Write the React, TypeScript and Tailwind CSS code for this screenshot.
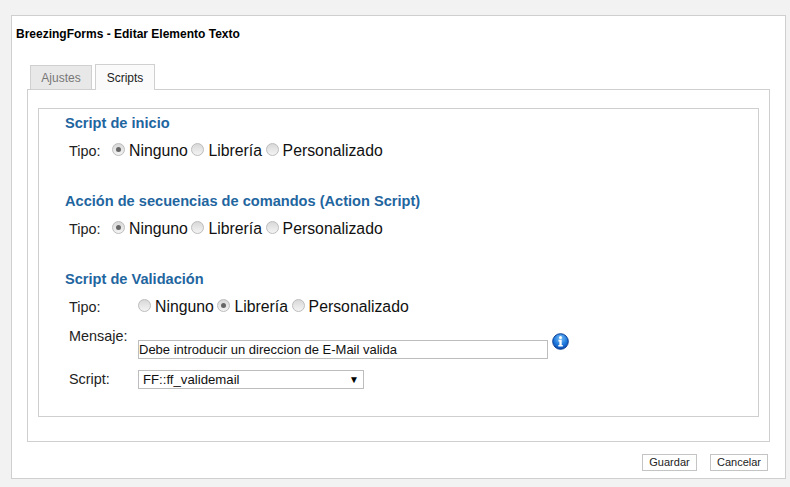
function Radio({ checked }: { checked?: boolean }) {
  return (
    <span className="flex h-[13px] w-[13px] shrink-0 -translate-y-[2px] items-center justify-center rounded-full border border-[#bcbcbc] bg-gradient-to-b from-[#d8d8d8] to-[#f4f4f4]">
      {checked && <span className="h-[5px] w-[5px] rounded-full bg-[#666]" />}
    </span>
  );
}

function Option({ label, checked }: { label: string; checked?: boolean }) {
  return (
    <span className="mr-[3.6px] flex items-center gap-[4px]">
      <Radio checked={checked} />
      <span>{label}</span>
    </span>
  );
}

function TypeRow({ selected, indent }: { selected: string; indent?: boolean }) {
  return (
    <div className="flex h-[20px] items-center text-[15.8px] leading-[20px] text-[#111]">
      <span className="box-content w-[43px] pl-[4px] text-[14.4px] text-[#222]">Tipo:</span>
      <span className={indent ? 'flex pl-[26px]' : 'flex'}>
        {['Ninguno', 'Librería', 'Personalizado'].map((name) => (
          <Option key={name} label={name} checked={name === selected} />
        ))}
      </span>
    </div>
  );
}

function InfoIcon() {
  return (
    <svg width="17" height="17" viewBox="0 0 17 17" className="shrink-0">
      <defs>
        <radialGradient id="infoFill" cx="50%" cy="30%" r="70%">
          <stop offset="0%" stopColor="#7cc0f5" />
          <stop offset="60%" stopColor="#1f7ade" />
          <stop offset="100%" stopColor="#0a48ad" />
        </radialGradient>
      </defs>
      <circle cx="8.5" cy="8.5" r="7.8" fill="url(#infoFill)" stroke="#0a3d94" strokeWidth="1" />
      <circle cx="8.5" cy="4.5" r="1.5" fill="#fff" />
      <path d="M6.5 6.8h3.2v5.2h1.1v1.6H6.3V12h1.1V8.4H6.5z" fill="#fff" />
    </svg>
  );
}

export default function App() {
  return (
    <div
      className="h-[487px] w-[790px] overflow-hidden bg-[#f2f2f2] pl-[11px] pt-[15px]"
      style={{ fontFamily: '"Liberation Sans", Arial, sans-serif' }}
    >
      <div className="h-[464px] w-[775px] border border-[#cfcfcf] bg-white pl-[4px] pt-[10px]">
        <h1 className="h-[16px] text-[12px] font-bold leading-[16px] text-black">
          BreezingForms - Editar Elemento Texto
        </h1>

        {/* Tabs */}
        <div className="ml-[14px] mt-[23px] flex h-[24px] gap-[3px] text-[12px]">
          <div className="flex h-[24px] w-[62px] items-center justify-center border border-b-0 border-[#d0d0d0] bg-[#e8e8e8] text-[#777]">
            Ajustes
          </div>
          <div className="relative z-10 -mt-px flex h-[26px] w-[60px] items-center justify-center border border-b-0 border-[#d0d0d0] bg-[#fafafa] text-[#222]">
            Scripts
          </div>
        </div>

        <div className="ml-[11px] h-[353px] w-[743px] border border-[#cfcfcf] bg-white pl-[10px] pt-[18px]">
          <div className="h-[309px] w-[721px] border border-[#cfcfcf] pl-[26px] pt-[5px]">
            <h3 className="h-[18px] text-[14.6px] font-bold leading-[18px] text-[#1f669f]">Script de inicio</h3>
            <div className="mt-[9px]">
              <TypeRow selected="Ninguno" />
            </div>

            <h3 className="mt-[31px] h-[18px] text-[14.6px] font-bold leading-[18px] text-[#1f669f]">
              Acción de secuencias de comandos (Action Script)
            </h3>
            <div className="mt-[9px]">
              <TypeRow selected="Ninguno" />
            </div>

            <h3 className="mt-[31px] h-[18px] text-[14.6px] font-bold leading-[18px] text-[#1f669f]">
              Script de Validación
            </h3>
            <div className="mt-[9px]">
              <TypeRow selected="Librería" indent />
            </div>

            <div className="mt-[11px] flex h-[42px] items-start pl-[4px] text-[14.4px] text-[#222]">
              <span className="w-[69px] leading-[16px]">Mensaje:</span>
              <input
                readOnly
                value="Debe introducir un direccion de E-Mail valida"
                className="mt-[12px] h-[19px] w-[410px] border border-[#bdbdbd] bg-white px-0 text-[13px] text-[#111] outline-none"
              />
              <span className="ml-[4px] mt-[5px]">
                <InfoIcon />
              </span>
            </div>

            <div className="flex h-[19px] items-center pl-[4px] text-[14.4px] text-[#222]">
              <span className="w-[69px]">Script:</span>
              <div className="flex h-[19px] w-[226px] items-center justify-between border border-[#bdbdbd] bg-white pl-[4px] pr-[4px] text-[13.2px] text-[#111]">
                <span>FF::ff_validemail</span>
                <span className="text-[10px] leading-none text-black">▼</span>
              </div>
            </div>
          </div>
        </div>

        {/* Footer buttons */}
        <div className="mt-[12px] flex w-[752px] justify-end gap-[13px] text-[11px] text-[#222]">
          <button className="h-[17px] w-[55px] border border-[#c4c4c4] bg-white leading-[15px]">Guardar</button>
          <button className="h-[17px] w-[58px] border border-[#c4c4c4] bg-white leading-[15px]">Cancelar</button>
        </div>
      </div>
    </div>
  );
}
